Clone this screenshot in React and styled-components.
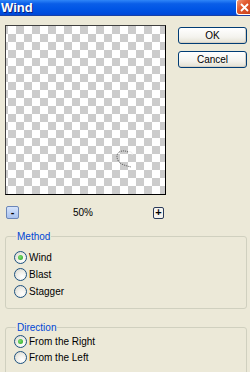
import React from "react"
import styled, { createGlobalStyle } from "styled-components"

const GlobalStyle = createGlobalStyle`
  html, body {
    margin: 0;
    padding: 0;
    background: #ece9d8;
    overflow: hidden;
  }
  body {
    font-family: "Liberation Sans", Arial, sans-serif;
    font-size: 10px;
    color: #000;
  }
`

const Window = styled.div`
  width: 250px;
  height: 372px;
  display: flex;
  flex-direction: column;
  background: #ece9d8;
  overflow: hidden;
`

const TitleBar = styled.div`
  height: 18px;
  display: flex;
  align-items: center;
  justify-content: space-between;
  background: linear-gradient(#2f86f8 0%, #0a5ee8 25%, #0055e5 60%, #0048d8 100%);
  border-bottom: 1px solid #1941a5;
`

const Title = styled.span`
  font-family: "Liberation Sans", Arial, sans-serif;
  font-weight: bold;
  font-size: 13px;
  color: #fff;
  padding-left: 1px;
  text-shadow: 1px 1px 0 #0a1e7a;
`

const CloseButton = styled.div`
  width: 15px;
  height: 16px;
  margin-right: -1px;
  margin-top: -1px;
  box-sizing: border-box;
  border: 1px solid #fff;
  border-right: none;
  border-radius: 3px 0 0 3px;
  background: linear-gradient(135deg, #f29a7a 0%, #e25a2f 40%, #c8401b 100%);
  display: flex;
  align-items: center;
  justify-content: center;
`

const Body = styled.div`
  display: flex;
  flex-direction: column;
  padding: 9px 3px 0 5px;
`

const TopRow = styled.div`
  display: flex;
  align-items: flex-start;
`

const Preview = styled.div`
  position: relative;
  width: 161px;
  height: 170px;
  box-sizing: border-box;
  border: 1px solid #000;
  border-top-color: #404040;
  border-left-color: #404040;
  background-color: #fff;
  background-image:
    linear-gradient(45deg, #cccccc 25%, transparent 25%, transparent 75%, #cccccc 75%),
    linear-gradient(45deg, #cccccc 25%, transparent 25%, transparent 75%, #cccccc 75%);
  background-size: 16px 16px;
  background-position: 2px 0, 10px 8px;
`

const Squiggle = styled.svg`
  position: absolute;
  left: 106px;
  top: 123px;
`

const ButtonColumn = styled.div`
  display: flex;
  flex-direction: column;
  gap: 7px;
  margin-left: 12px;
  margin-top: 2px;
`

const Button = styled.button`
  width: 69px;
  height: 17px;
  padding: 0;
  box-sizing: border-box;
  border: 1px solid #003c74;
  border-radius: 3px;
  background: linear-gradient(#ffffff 0%, #f4f3ee 60%, #e3e0d2 100%);
  box-shadow: inset -1px -1px 0 #d6d0c5;
  font-family: "Liberation Sans", Arial, sans-serif;
  font-size: 10px;
  color: #000;
`

const ZoomRow = styled.div`
  width: 158px;
  margin: 11px 0 0 1px;
  display: flex;
  align-items: center;
  justify-content: space-between;
`

const ZoomButton = styled.div`
  width: ${p => (p.$wide ? 13 : 11)}px;
  height: ${p => (p.$wide ? 13 : 12)}px;
  box-sizing: border-box;
  border: 1px solid ${p => (p.$wide ? "#6b86b8" : "#2a3a5a")};
  border-radius: 2px;
  background: ${p => (p.$wide ? "linear-gradient(#d6e4fb, #a9c2ee)" : "#f4f3ee")};
  display: flex;
  align-items: center;
  justify-content: center;
  font-size: 11px;
  line-height: 1;
  font-weight: bold;
  color: #000;
`

const ZoomLabel = styled.span`
  margin-left: 2px;
  margin-right: 8px;
`

const GroupBox = styled.fieldset`
  margin: ${p => p.$top}px 0 0 0;
  padding: ${p => p.$padTop}px 0 ${p => p.$bottom}px 8px;
  width: 242px;
  box-sizing: border-box;
  border: 1px solid #d0d0bf;
  border-radius: 3px;
  display: flex;
  flex-direction: column;
  gap: ${p => p.$gap}px;
`

const Legend = styled.legend`
  padding: 0 1px;
  margin-left: 2px;
  color: #0046d5;
  font-size: 10px;
  line-height: 13px;
`

const RadioRow = styled.label`
  display: flex;
  align-items: center;
  height: 13px;
  gap: 2px;
`

const RadioCircle = styled.span`
  width: 13px;
  height: 13px;
  box-sizing: border-box;
  border-radius: 50%;
  border: 1px solid #1c5180;
  background: radial-gradient(circle at 65% 70%, #ffffff 0%, #f0efea 45%, #d6d3c6 100%);
  display: flex;
  align-items: center;
  justify-content: center;

  &::after {
    content: "";
    width: 5px;
    height: 5px;
    border-radius: 50%;
    background: ${p => (p.$checked ? "radial-gradient(circle at 40% 40%, #7ede6e, #21a121)" : "transparent")};
  }
`

function Radio({ label, checked }) {
  return (
    <RadioRow>
      <RadioCircle $checked={checked} />
      {label}
    </RadioRow>
  )
}

export default function App() {
  return (
    <Window>
      <GlobalStyle />
      <TitleBar>
        <Title>Wind</Title>
        <CloseButton>
          <svg width="9" height="9" viewBox="0 0 9 9">
            <path d="M1 1 L8 8 M8 1 L1 8" stroke="#fff" strokeWidth="1.8" />
          </svg>
        </CloseButton>
      </TitleBar>
      <Body>
        <TopRow>
          <Preview>
            <Squiggle width="26" height="20" viewBox="0 0 26 20">
              <path
                d="M16 3 C 12 1, 8 2, 6 4 C 4 7, 5 11, 8 14 C 11 16, 15 17, 19 18"
                fill="none"
                stroke="#555"
                strokeWidth="1"
                strokeDasharray="1 1"
              />
              <path d="M16 3 C 19 2, 21 4, 20 6" fill="none" stroke="#eee" strokeWidth="1" />
            </Squiggle>
          </Preview>
          <ButtonColumn>
            <Button>OK</Button>
            <Button>Cancel</Button>
          </ButtonColumn>
        </TopRow>
        <ZoomRow>
          <ZoomButton $wide>-</ZoomButton>
          <ZoomLabel>50%</ZoomLabel>
          <ZoomButton>+</ZoomButton>
        </ZoomRow>
        <GroupBox $top={11} $padTop={8} $gap={4} $bottom={10}>
          <Legend>Method</Legend>
          <Radio label="Wind" checked />
          <Radio label="Blast" />
          <Radio label="Stagger" />
        </GroupBox>
        <GroupBox $top={12} $padTop={1} $gap={3} $bottom={40}>
          <Legend>Direction</Legend>
          <Radio label="From the Right" checked />
          <Radio label="From the Left" />
        </GroupBox>
      </Body>
    </Window>
  )
}
